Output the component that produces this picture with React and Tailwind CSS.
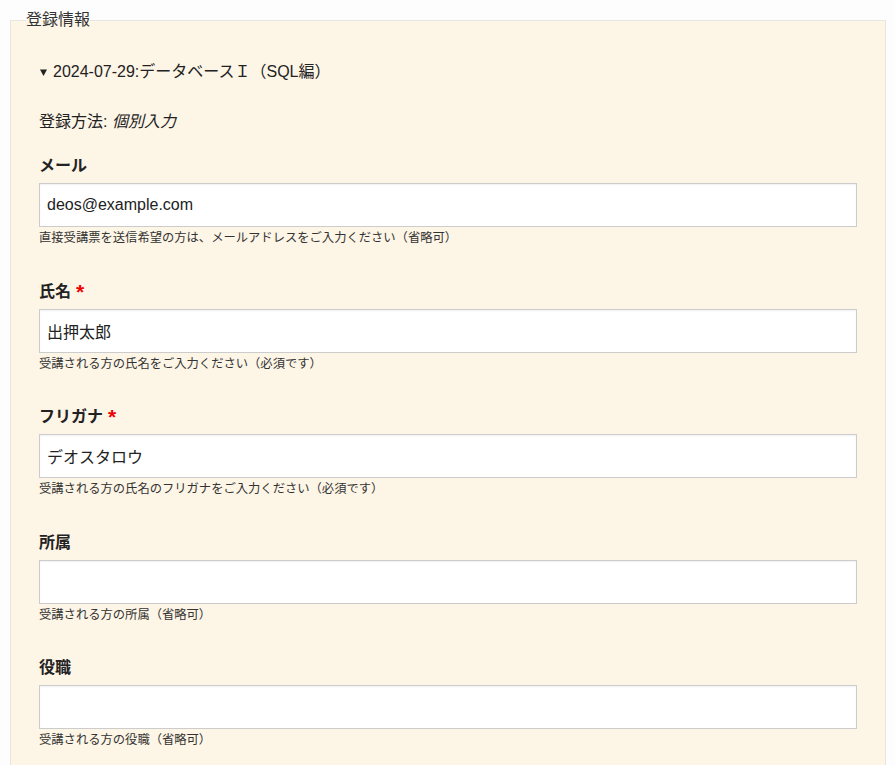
import React from "react"

const fields = [
  { label: "メール", value: "deos@example.com", help: "直接受講票を送信希望の方は、メールアドレスをご入力ください（省略可）" },
  { label: "氏名", required: true, value: "出押太郎", help: "受講される方の氏名をご入力ください（必須です）" },
  { label: "フリガナ", required: true, value: "デオスタロウ", help: "受講される方の氏名のフリガナをご入力ください（必須です）" },
  { label: "所属", value: "", help: "受講される方の所属（省略可）" },
  { label: "役職", value: "", help: "受講される方の役職（省略可）" },
]

/*___ one form row ___*/
function Field({ label, required, value, help }) {
  return (
    <div className="mb-[33.5px]">
      <label className="flex items-center text-[16px] leading-[22px] font-bold text-[#222] mb-[6px]">
        {label}
        {required && <span className="ml-[5px] text-[#e00] text-[21px] leading-[22px]">*</span>}
      </label>
      <input
        type="text"
        readOnly
        defaultValue={value}
        className="block w-full h-[44px] px-[7px] bg-white border border-[#cccccc] text-[16px] text-[#222] shadow-[inset_0_1px_2px_rgba(0,0,0,0.06)] outline-none"
      />
      <p className="mt-[2px] text-[12.3px] leading-[18px] text-[#333]">{help}</p>
    </div>
  )
}

export default function App() {
  return (
    <div
      className="min-h-screen bg-[#fdfdfd] pt-[8px] pl-[10px] pr-[9px]"
      style={{ fontFamily: '"Liberation Sans", "Noto Sans CJK JP", sans-serif' }}
    >
      <fieldset className="border border-[#e8e6e2] bg-[#fdf5e6] px-[28px] pb-[60px]">
        <legend className="ml-[-13px] text-[16px] leading-6 text-[#333]">登録情報</legend>

        <details open className="mt-[28px]">
          <summary className="list-none flex items-center text-[16px] leading-6 text-[#222] cursor-pointer [&::-webkit-details-marker]:hidden">
            <svg width="7" height="7" viewBox="0 0 7 7" className="ml-[1px] mr-[6px]">
              <path d="M0 0.5h7L3.5 7z" fill="#222" />
            </svg>
            2024-07-29:データベースＩ（SQL編）
          </summary>

          <p className="mt-[26px] text-[16px] leading-6 text-[#222]">
            登録方法: <em>個別入力</em>
          </p>

          <div className="mt-[21px]">
            {fields.map((f) => (
              <Field key={f.label} {...f} />
            ))}
          </div>
        </details>
      </fieldset>
    </div>
  )
}
